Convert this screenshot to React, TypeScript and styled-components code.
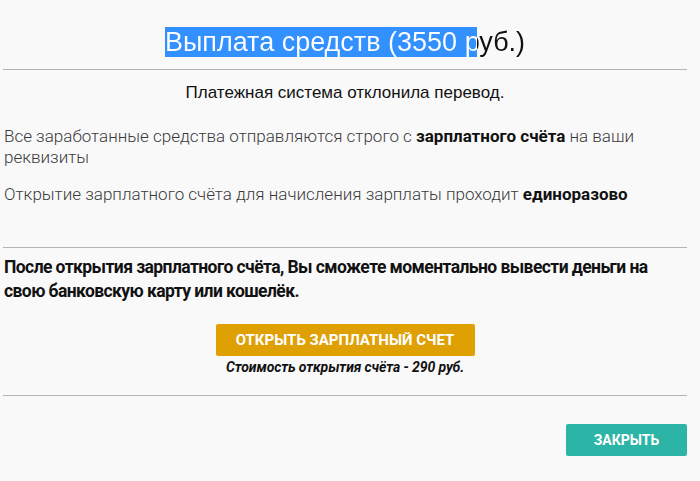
import React, { FC } from 'react';
import styled, { createGlobalStyle } from 'styled-components';

const GlobalStyle = createGlobalStyle`
  html, body {
    margin: 0;
    padding: 0;
    background: #f9f9fa;
  }
`;

const Modal = styled.div`
  width: 684px;
  padding: 0 13px 0 3px;
  display: flex;
  flex-direction: column;
  font-family: Roboto, "Liberation Sans", sans-serif;
`;

const Title = styled.h1`
  margin: 26px 0 11px;
  text-align: center;
  font-family: "Liberation Sans", Arial, sans-serif;
  font-weight: 400;
  font-size: 27px;
  line-height: 32px;
  color: #111;
`;

const Selected = styled.span`
  background: linear-gradient(to right, #3390ff 0 312px, transparent 312px);
`;

const SelectedText = styled.span`
  background: linear-gradient(to right, #fff 0 312px, #111 312px);
  -webkit-background-clip: text;
  background-clip: text;
  color: transparent;
`;

const Divider = styled.hr`
  margin: 0;
  border: none;
  border-top: 1px solid #b4b4b4;
  height: 0;
`;

const Notice = styled.p`
  margin: 13px 0 23px;
  text-align: center;
  font-family: "Liberation Sans", Arial, sans-serif;
  font-size: 17px;
  line-height: 20px;
  color: #111;
`;

const Text = styled.p`
  margin: 0 0 16px;
  padding-left: 1px;
  font-size: 17px;
  font-weight: 300;
  line-height: 21px;
  color: #3a3a3a;

  b {
    font-weight: 700;
    color: #111;
  }
`;

const Spacer = styled.div<{ $h: number }>`
  height: ${ props => props.$h }px;
`;

const Lead = styled.p`
  margin: 7px 0 21px;
  padding-left: 1px;
  font-size: 17.5px;
  font-weight: 700;
  line-height: 24px;
  color: #111;
  letter-spacing: -0.58px;
`;

const Offer = styled.div`
  display: flex;
  flex-direction: column;
  align-items: center;
  gap: 2px;
  margin-bottom: 19px;
`;

const Button = styled.button<{ $color: string }>`
  border: none;
  border-radius: 2px;
  background: ${ props => props.$color };
  color: #fff;
  font-family: Roboto, "Liberation Sans", sans-serif;
  font-weight: 700;
  font-size: 14px;
  text-transform: uppercase;
  cursor: pointer;
  height: 32px;
`;

const OpenButton = styled(Button)`
  width: 259px;
  font-size: 15px;
`;

const Price = styled.div`
  font-size: 14px;
  font-weight: 700;
  font-style: italic;
  letter-spacing: -0.1px;
  color: #111;
  line-height: 18px;
`;

const Footer = styled.div`
  display: flex;
  justify-content: flex-end;
  padding-top: 28px;
`;

const CloseButton = styled(Button)`
  width: 121px;
`;

const App: FC = () => (
  <>
    <GlobalStyle />
    <Modal>
      <Title>
        <Selected><SelectedText>Выплата средств (3550 руб.)</SelectedText></Selected>
      </Title>
      <Divider />
      <Notice>Платежная система отклонила перевод.</Notice>
      <Text>
        Все заработанные средства отправляются строго с <b>зарплатного счёта</b> на ваши реквизиты
      </Text>
      <Text>
        Открытие зарплатного счёта для начисления зарплаты проходит <b>единоразово</b>
      </Text>
      <Spacer $h={26} />
      <Divider />
      <Lead>
        После открытия зарплатного счёта, Вы сможете моментально вывести деньги на свою банковскую карту или кошелёк.
      </Lead>
      <Offer>
        <OpenButton $color="#dfa004">Открыть зарплатный счет</OpenButton>
        <Price>Стоимость открытия счёта - 290 руб.</Price>
      </Offer>
      <Divider />
      <Footer>
        <CloseButton $color="#2cb5a6">Закрыть</CloseButton>
      </Footer>
    </Modal>
  </>
);

export default App;
